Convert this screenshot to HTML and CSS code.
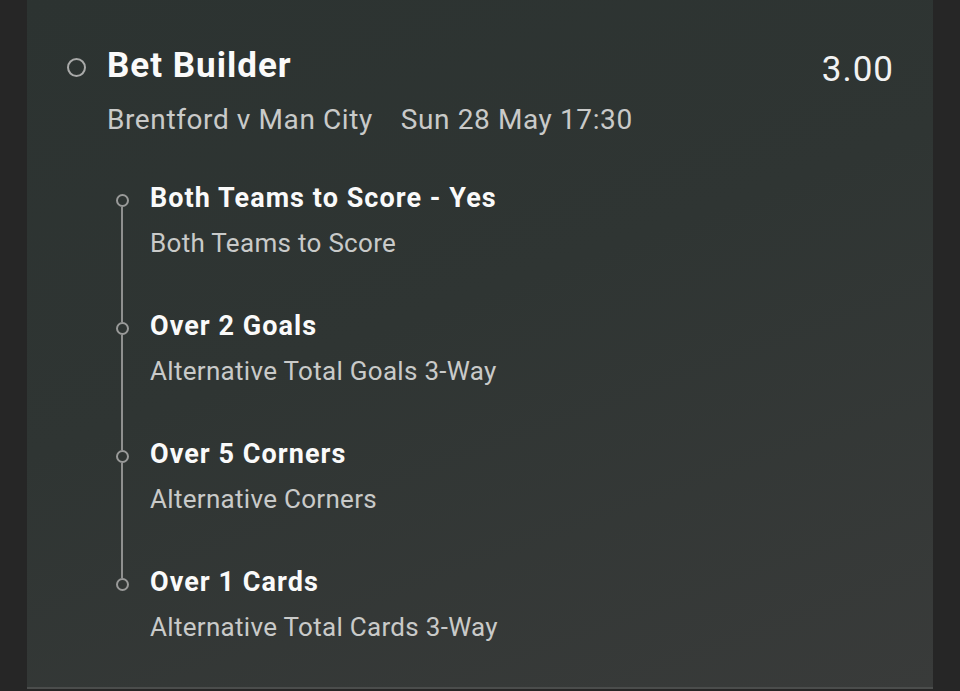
FILE: index.html
```html
<!DOCTYPE html>
<html>
<head>
<meta charset="utf-8">
<link rel="stylesheet" href="styles.css">
</head>
<body>
<div class="page">
  <div class="card">
    <div class="header">
      <span class="head-dot"></span>
      <div class="head-text">
        <div class="title">Bet Builder</div>
        <div class="match"><span>Brentford v Man City</span><span class="when">Sun 28 May 17:30</span></div>
      </div>
      <div class="odds">3.00</div>
    </div>
    <div class="legs">
      <div class="leg first">
        <div class="marker"><span class="seg top"></span><span class="dot"></span><span class="seg bottom"></span></div>
        <div class="leg-text"><div class="leg-title">Both Teams to Score - Yes</div><div class="leg-sub">Both Teams to Score</div></div>
      </div>
      <div class="leg">
        <div class="marker"><span class="seg top"></span><span class="dot"></span><span class="seg bottom"></span></div>
        <div class="leg-text"><div class="leg-title">Over 2 Goals</div><div class="leg-sub">Alternative Total Goals 3-Way</div></div>
      </div>
      <div class="leg">
        <div class="marker"><span class="seg top"></span><span class="dot"></span><span class="seg bottom"></span></div>
        <div class="leg-text"><div class="leg-title">Over 5 Corners</div><div class="leg-sub">Alternative Corners</div></div>
      </div>
      <div class="leg last">
        <div class="marker"><span class="seg top"></span><span class="dot"></span><span class="seg bottom"></span></div>
        <div class="leg-text"><div class="leg-title">Over 1 Cards</div><div class="leg-sub">Alternative Total Cards 3-Way</div></div>
      </div>
    </div>
  </div>
</div>
</body>
</html>
```
FILE: styles.css
```css
html, body {
  margin: 0;
  padding: 0;
  background: #262626;
  font-family: Roboto, "Noto Sans", sans-serif;
}
.page {
  display: flex;
  width: 960px;
  height: 691px;
  overflow: hidden;
}
.card {
  margin-left: 27px;
  width: 906px;
  height: 689px;
  border-bottom: 2px solid #4b4d4c;
  background: linear-gradient(160deg, #2c3331 0%, #2f3533 45%, #393b3a 100%);
  padding: 46px 40px 0 40px;
  box-sizing: border-box;
}
.header {
  display: flex;
  align-items: flex-start;
}
.head-dot {
  width: 19px;
  height: 19px;
  box-sizing: border-box;
  border: 2px solid #a9aaa9;
  border-radius: 50%;
  margin-top: 12px;
  flex: none;
}
.head-text {
  margin-left: 21px;
  flex: 1;
}
.title {
  font-size: 35px;
  line-height: 40px;
  font-weight: 700;
  letter-spacing: 1px;
  color: #fafafa;
}
.match {
  margin-top: 17px;
  font-size: 28px;
  line-height: 34px;
  letter-spacing: 0.6px;
  color: #c9cac9;
  display: flex;
  gap: 28px;
}
.odds {
  font-size: 35px;
  line-height: 40px;
  letter-spacing: 1px;
  color: #f2f2f2;
  margin-top: 4px;
  margin-right: -1px;
}
.legs {
  margin-top: 45px;
  margin-left: 48px;
  display: flex;
  flex-direction: column;
}
.leg {
  display: flex;
}
.marker {
  width: 14px;
  display: flex;
  flex-direction: column;
  align-items: center;
  flex: none;
}
.seg {
  width: 2px;
  background: #8f908f;
}
.seg.top {
  height: 12px;
}
.seg.bottom {
  flex: 1;
}
.first .seg.top,
.last .seg.bottom {
  background: transparent;
}
.dot {
  width: 13px;
  height: 13px;
  box-sizing: border-box;
  border: 2px solid #999a99;
  border-radius: 50%;
  flex: none;
}
.leg-text {
  margin-left: 21px;
  padding-bottom: 51px;
}
.last .leg-text {
  padding-bottom: 0;
}
.leg-title {
  font-size: 27px;
  line-height: 32px;
  font-weight: 700;
  letter-spacing: 1.05px;
  color: #fafafa;
}
.leg-sub {
  margin-top: 13px;
  font-size: 26px;
  line-height: 32px;
  letter-spacing: 0.3px;
  color: #c9cac9;
}
```
